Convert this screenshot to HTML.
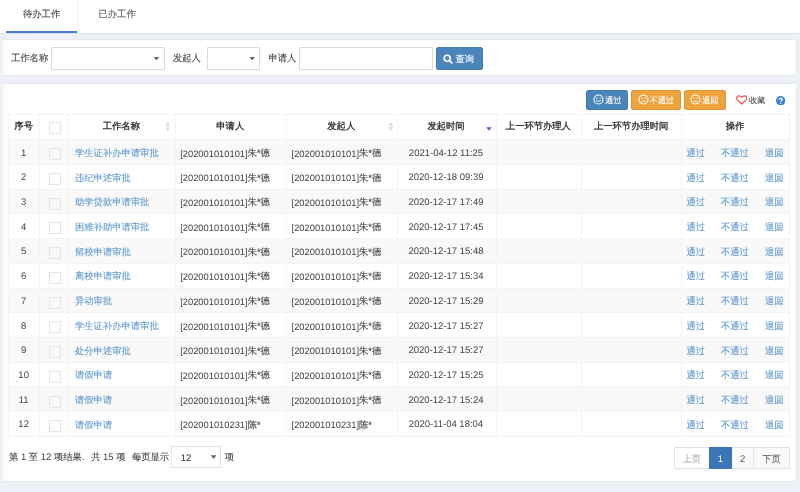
<!DOCTYPE html>
<html><head><meta charset="utf-8"><style>
*{box-sizing:border-box;margin:0;padding:0}
html,body{width:800px;height:492px;overflow:hidden}
body{background:#edf0f7;font-family:"Liberation Sans",sans-serif;font-size:9.5px;color:#333;position:relative;text-rendering:geometricPrecision}
.a{position:absolute;white-space:nowrap}
.c{font-size:9.3px;-webkit-text-stroke:.12px}
.t{line-height:12px}
.sb .c{font-size:8.1px}
.r .c{position:relative;top:-.7px}
.hb{-webkit-text-stroke:.3px}
.sel{position:absolute;border:1px solid #dcdcdc;background:#fff}
.caret{position:absolute;width:5.8px;height:3.8px;background:#666;clip-path:polygon(0 0,100% 0,50% 100%)}
.btn{position:absolute;border-radius:2.5px;color:#fff;box-shadow:inset 0 0 0 1px rgba(0,0,0,.07)}
.blue{background:#4a86bb}
.orange{background:#eda33e}
.cb{position:absolute;width:12.5px;height:12px;border:1px solid #e4e4e4}
.lk{color:#639dd3}
.pg{position:absolute;top:447px;height:22.4px;border:1px solid #e3e3e3;text-align:center;line-height:22.4px}
</style></head><body>
<div class="a" style="left:0;top:0;width:800px;height:492px;will-change:transform"><div class="a" style="left:0;top:0;width:800px;height:33px;background:#fff"></div>
<div class="a" style="left:0;top:32.8px;width:800px;height:1px;background:#dde1e6"></div>
<div class="a" style="left:77.3px;top:0;width:1px;height:32.8px;background:#f4f4f4"></div>
<div class="a" style="left:5.6px;top:31px;width:71.9px;height:2.2px;background:#4a7fd6"></div>
<div class="a t" style="left:23px;top:8px;color:#3c3c3c"><span class="c">待办工作</span></div>
<div class="a t" style="left:98.5px;top:8px;color:#555"><span class="c">已办工作</span></div>
<div class="a" style="left:1.5px;top:39.3px;width:794px;height:36.8px;background:#fff;border:1px solid #e6e9ed;border-width:1px 0;box-shadow:inset 3px 0 0 #f7f9fb,inset -1.5px 0 0 #f7f9fb"></div>
<div class="a t" style="left:11px;top:52px;color:#444"><span class="c">工作名称</span></div>
<div class="sel" style="left:51.3px;top:46.9px;width:113.3px;height:22.8px"><span class="caret" style="left:101.3px;top:8.8px"></span></div>
<div class="a t" style="left:173px;top:52px;color:#444"><span class="c">发起人</span></div>
<div class="sel" style="left:207px;top:46.9px;width:53px;height:22.8px"><span class="caret" style="left:41.3px;top:8.8px"></span></div>
<div class="a t" style="left:268.5px;top:52px;color:#444"><span class="c">申请人</span></div>
<div class="sel" style="left:299.4px;top:46.9px;width:133.4px;height:22.8px"></div>
<div class="btn blue" style="left:436px;top:46.9px;width:47px;height:22.8px"><svg width="10" height="10" viewBox="0 0 10 10" style="position:absolute;left:7.2px;top:7.4px"><circle cx="4.2" cy="4.2" r="3" fill="none" stroke="#fff" stroke-width="1.6"/><line x1="6.3" y1="6.3" x2="8.8" y2="8.8" stroke="#fff" stroke-width="1.8" stroke-linecap="round"/></svg><span class="a t" style="left:19.5px;top:6px"><span class="c">查询</span></span></div>
<div class="a" style="left:1.5px;top:82.6px;width:794px;height:399.4px;background:#fff;border:1px solid #e6e9ed;border-width:1px 0;box-shadow:inset 3px 0 0 #f7f9fb,inset -1.5px 0 0 #f7f9fb"></div>
<div class="btn sb blue" style="left:586.3px;top:90.3px;width:42px;height:19.5px"><svg width="11" height="11" viewBox="0 0 11 11" style="position:absolute;left:6.5px;top:4px"><circle cx="5.5" cy="5.5" r="4.5" fill="none" stroke="#fff" stroke-width="1.15"/><circle cx="3.8" cy="4.2" r=".7" fill="#fff"/><circle cx="7.2" cy="4.2" r=".7" fill="#fff"/><path d="M3.2 6.3 Q5.5 8.8 7.8 6.3" fill="none" stroke="#fff" stroke-width="1"/></svg><span class="a t" style="left:19px;top:4.3px"><span class="c">通过</span></span></div>
<div class="btn sb orange" style="left:631.3px;top:90.3px;width:49.4px;height:19.5px"><svg width="11" height="11" viewBox="0 0 11 11" style="position:absolute;left:6.5px;top:4px"><circle cx="5.5" cy="5.5" r="4.5" fill="none" stroke="#fff" stroke-width="1.15"/><circle cx="3.8" cy="4.2" r=".7" fill="#fff"/><circle cx="7.2" cy="4.2" r=".7" fill="#fff"/><path d="M3.3 8 Q5.5 5.8 7.7 8" fill="none" stroke="#fff" stroke-width="1"/></svg><span class="a t" style="left:18.5px;top:4.3px"><span class="c">不通过</span></span></div>
<div class="btn sb orange" style="left:684.2px;top:90.3px;width:41.5px;height:19.5px"><svg width="11" height="11" viewBox="0 0 11 11" style="position:absolute;left:6.3px;top:4px"><circle cx="5.5" cy="5.5" r="4.5" fill="none" stroke="#fff" stroke-width="1.15"/><circle cx="3.8" cy="4.2" r=".7" fill="#fff"/><circle cx="7.2" cy="4.2" r=".7" fill="#fff"/><path d="M3.3 8 Q5.5 5.8 7.7 8" fill="none" stroke="#fff" stroke-width="1"/></svg><span class="a t" style="left:18px;top:4.3px"><span class="c">退回</span></span></div>
<svg class="a" style="left:735.6px;top:95.2px" width="11.5" height="9.8" viewBox="0 0 11.5 9.8"><path d="M5.75 9 L1.5 4.9 C0.2 3.6 0.6 0.9 2.8 0.8 C4.1 0.75 5.1 1.5 5.75 2.4 C6.4 1.5 7.4 0.75 8.7 0.8 C10.9 0.9 11.3 3.6 10 4.9 Z" fill="none" stroke="#ea5652" stroke-width="1.3" stroke-linejoin="round"/></svg>
<div class="a t sb" style="left:749px;top:95px;color:#555"><span class="c">收藏</span></div>
<svg class="a" style="left:775.9px;top:95.5px" width="9.4" height="9.4" viewBox="0 0 9.4 9.4"><circle cx="4.7" cy="4.7" r="4.7" fill="#3e7ede"/><path d="M3.1 3.7 C3.1 1.9 6.3 1.9 6.3 3.6 C6.3 4.7 4.7 4.7 4.7 5.8" fill="none" stroke="#fff" stroke-width="1.3"/><circle cx="4.7" cy="7.3" r=".75" fill="#fff"/></svg>
<div class="a" style="left:8px;top:139.20px;width:781px;height:24.72px;background:#f9f9f9"></div>
<div class="a" style="left:8px;top:188.64px;width:781px;height:24.72px;background:#f9f9f9"></div>
<div class="a" style="left:8px;top:238.08px;width:781px;height:24.72px;background:#f9f9f9"></div>
<div class="a" style="left:8px;top:287.52px;width:781px;height:24.72px;background:#f9f9f9"></div>
<div class="a" style="left:8px;top:336.96px;width:781px;height:24.72px;background:#f9f9f9"></div>
<div class="a" style="left:8px;top:386.40px;width:781px;height:24.72px;background:#f9f9f9"></div>
<div class="a" style="left:8px;top:113.90px;width:781px;height:1px;background:#f3f3f3"></div>
<div class="a" style="left:8px;top:139.20px;width:781px;height:1px;background:#f3f3f3"></div>
<div class="a" style="left:8px;top:163.92px;width:781px;height:1px;background:#f3f3f3"></div>
<div class="a" style="left:8px;top:188.64px;width:781px;height:1px;background:#f3f3f3"></div>
<div class="a" style="left:8px;top:213.36px;width:781px;height:1px;background:#f3f3f3"></div>
<div class="a" style="left:8px;top:238.08px;width:781px;height:1px;background:#f3f3f3"></div>
<div class="a" style="left:8px;top:262.80px;width:781px;height:1px;background:#f3f3f3"></div>
<div class="a" style="left:8px;top:287.52px;width:781px;height:1px;background:#f3f3f3"></div>
<div class="a" style="left:8px;top:312.24px;width:781px;height:1px;background:#f3f3f3"></div>
<div class="a" style="left:8px;top:336.96px;width:781px;height:1px;background:#f3f3f3"></div>
<div class="a" style="left:8px;top:361.68px;width:781px;height:1px;background:#f3f3f3"></div>
<div class="a" style="left:8px;top:386.40px;width:781px;height:1px;background:#f3f3f3"></div>
<div class="a" style="left:8px;top:411.12px;width:781px;height:1px;background:#f3f3f3"></div>
<div class="a" style="left:8px;top:435.84px;width:781px;height:1px;background:#f3f3f3"></div>
<div class="a" style="left:8px;top:113.90px;width:1px;height:321.94px;background:#f4f4f4"></div>
<div class="a" style="left:39.3px;top:113.90px;width:1px;height:321.94px;background:#f4f4f4"></div>
<div class="a" style="left:68.2px;top:113.90px;width:1px;height:321.94px;background:#f4f4f4"></div>
<div class="a" style="left:174.5px;top:113.90px;width:1px;height:321.94px;background:#f4f4f4"></div>
<div class="a" style="left:286px;top:113.90px;width:1px;height:321.94px;background:#f4f4f4"></div>
<div class="a" style="left:396.5px;top:113.90px;width:1px;height:321.94px;background:#f4f4f4"></div>
<div class="a" style="left:495.5px;top:113.90px;width:1px;height:321.94px;background:#f4f4f4"></div>
<div class="a" style="left:581.25px;top:113.90px;width:1px;height:321.94px;background:#f4f4f4"></div>
<div class="a" style="left:681px;top:113.90px;width:1px;height:321.94px;background:#f4f4f4"></div>
<div class="a" style="left:789px;top:113.90px;width:1px;height:321.94px;background:#f4f4f4"></div>
<div class="a t" style="left:8px;width:31.299999999999997px;top:120.20px;text-align:center;color:#2a2a2a"><span class="c hb">序号</span></div>
<div class="a t" style="left:68.2px;width:106.3px;top:120.20px;text-align:center;color:#2a2a2a"><span class="c hb">工作名称</span></div>
<div class="a t" style="left:174.5px;width:111.5px;top:120.20px;text-align:center;color:#2a2a2a"><span class="c hb">申请人</span></div>
<div class="a t" style="left:286px;width:110.5px;top:120.20px;text-align:center;color:#2a2a2a"><span class="c hb">发起人</span></div>
<div class="a t" style="left:396.5px;width:99.0px;top:120.20px;text-align:center;color:#2a2a2a"><span class="c hb">发起时间</span></div>
<div class="a t" style="left:495.5px;width:85.75px;top:120.20px;text-align:center;color:#2a2a2a"><span class="c hb">上一环节办理人</span></div>
<div class="a t" style="left:581.25px;width:99.75px;top:120.20px;text-align:center;color:#2a2a2a"><span class="c hb">上一环节办理时间</span></div>
<div class="a t" style="left:681px;width:108px;top:120.20px;text-align:center;color:#2a2a2a"><span class="c hb">操作</span></div>
<span class="cb" style="left:48.5px;top:121.90px"></span>
<svg class="a" style="left:165px;top:120.80px" width="5.6" height="11" viewBox="0 0 5.6 11"><path d="M2.8 0.4 L5.4 4.9 H0.2Z M2.8 10.6 L5.4 6.1 H0.2Z" fill="#e0e0e0"/></svg>
<svg class="a" style="left:387.8px;top:120.80px" width="5.6" height="11" viewBox="0 0 5.6 11"><path d="M2.8 0.4 L5.4 4.9 H0.2Z M2.8 10.6 L5.4 6.1 H0.2Z" fill="#e0e0e0"/></svg>
<svg class="a" style="left:485.5px;top:126.90px" width="6" height="4" viewBox="0 0 6 4"><path d="M0.3 0.3 H5.7 L3 3.7Z" fill="#5b5bd6"/></svg>
<div class="a t" style="left:8px;width:31.299999999999997px;top:147.50px;text-align:center;color:#444">1</div>
<span class="cb" style="left:48.5px;top:148.30px"></span>
<div class="a t r lk" style="left:75px;top:147.50px"><span class="c">学生证补办申请审批</span></div>
<div class="a t r" style="left:180.2px;top:147.50px;color:#444;font-size:9.33px">[202001010101]<span class="c">朱*德</span></div>
<div class="a t r" style="left:291.6px;top:147.50px;color:#444;font-size:9.33px">[202001010101]<span class="c">朱*德</span></div>
<div class="a t" style="left:396.5px;width:99.0px;top:147.50px;text-align:center;color:#444">2021-04-12 11:25</div>
<div class="a t r lk" style="left:686.4px;top:147.50px"><span class="c">通过</span></div>
<div class="a t r lk" style="left:721px;top:147.50px"><span class="c">不通过</span></div>
<div class="a t r lk" style="left:765px;top:147.50px"><span class="c">退回</span></div>
<div class="a t" style="left:8px;width:31.299999999999997px;top:172.22px;text-align:center;color:#444">2</div>
<span class="cb" style="left:48.5px;top:173.02px"></span>
<div class="a t r lk" style="left:75px;top:172.22px"><span class="c">违纪申述审批</span></div>
<div class="a t r" style="left:180.2px;top:172.22px;color:#444;font-size:9.33px">[202001010101]<span class="c">朱*德</span></div>
<div class="a t r" style="left:291.6px;top:172.22px;color:#444;font-size:9.33px">[202001010101]<span class="c">朱*德</span></div>
<div class="a t" style="left:396.5px;width:99.0px;top:172.22px;text-align:center;color:#444">2020-12-18 09:39</div>
<div class="a t r lk" style="left:686.4px;top:172.22px"><span class="c">通过</span></div>
<div class="a t r lk" style="left:721px;top:172.22px"><span class="c">不通过</span></div>
<div class="a t r lk" style="left:765px;top:172.22px"><span class="c">退回</span></div>
<div class="a t" style="left:8px;width:31.299999999999997px;top:196.94px;text-align:center;color:#444">3</div>
<span class="cb" style="left:48.5px;top:197.74px"></span>
<div class="a t r lk" style="left:75px;top:196.94px"><span class="c">助学贷款申请审批</span></div>
<div class="a t r" style="left:180.2px;top:196.94px;color:#444;font-size:9.33px">[202001010101]<span class="c">朱*德</span></div>
<div class="a t r" style="left:291.6px;top:196.94px;color:#444;font-size:9.33px">[202001010101]<span class="c">朱*德</span></div>
<div class="a t" style="left:396.5px;width:99.0px;top:196.94px;text-align:center;color:#444">2020-12-17 17:49</div>
<div class="a t r lk" style="left:686.4px;top:196.94px"><span class="c">通过</span></div>
<div class="a t r lk" style="left:721px;top:196.94px"><span class="c">不通过</span></div>
<div class="a t r lk" style="left:765px;top:196.94px"><span class="c">退回</span></div>
<div class="a t" style="left:8px;width:31.299999999999997px;top:221.66px;text-align:center;color:#444">4</div>
<span class="cb" style="left:48.5px;top:222.46px"></span>
<div class="a t r lk" style="left:75px;top:221.66px"><span class="c">困难补助申请审批</span></div>
<div class="a t r" style="left:180.2px;top:221.66px;color:#444;font-size:9.33px">[202001010101]<span class="c">朱*德</span></div>
<div class="a t r" style="left:291.6px;top:221.66px;color:#444;font-size:9.33px">[202001010101]<span class="c">朱*德</span></div>
<div class="a t" style="left:396.5px;width:99.0px;top:221.66px;text-align:center;color:#444">2020-12-17 17:45</div>
<div class="a t r lk" style="left:686.4px;top:221.66px"><span class="c">通过</span></div>
<div class="a t r lk" style="left:721px;top:221.66px"><span class="c">不通过</span></div>
<div class="a t r lk" style="left:765px;top:221.66px"><span class="c">退回</span></div>
<div class="a t" style="left:8px;width:31.299999999999997px;top:246.38px;text-align:center;color:#444">5</div>
<span class="cb" style="left:48.5px;top:247.18px"></span>
<div class="a t r lk" style="left:75px;top:246.38px"><span class="c">留校申请审批</span></div>
<div class="a t r" style="left:180.2px;top:246.38px;color:#444;font-size:9.33px">[202001010101]<span class="c">朱*德</span></div>
<div class="a t r" style="left:291.6px;top:246.38px;color:#444;font-size:9.33px">[202001010101]<span class="c">朱*德</span></div>
<div class="a t" style="left:396.5px;width:99.0px;top:246.38px;text-align:center;color:#444">2020-12-17 15:48</div>
<div class="a t r lk" style="left:686.4px;top:246.38px"><span class="c">通过</span></div>
<div class="a t r lk" style="left:721px;top:246.38px"><span class="c">不通过</span></div>
<div class="a t r lk" style="left:765px;top:246.38px"><span class="c">退回</span></div>
<div class="a t" style="left:8px;width:31.299999999999997px;top:271.10px;text-align:center;color:#444">6</div>
<span class="cb" style="left:48.5px;top:271.90px"></span>
<div class="a t r lk" style="left:75px;top:271.10px"><span class="c">离校申请审批</span></div>
<div class="a t r" style="left:180.2px;top:271.10px;color:#444;font-size:9.33px">[202001010101]<span class="c">朱*德</span></div>
<div class="a t r" style="left:291.6px;top:271.10px;color:#444;font-size:9.33px">[202001010101]<span class="c">朱*德</span></div>
<div class="a t" style="left:396.5px;width:99.0px;top:271.10px;text-align:center;color:#444">2020-12-17 15:34</div>
<div class="a t r lk" style="left:686.4px;top:271.10px"><span class="c">通过</span></div>
<div class="a t r lk" style="left:721px;top:271.10px"><span class="c">不通过</span></div>
<div class="a t r lk" style="left:765px;top:271.10px"><span class="c">退回</span></div>
<div class="a t" style="left:8px;width:31.299999999999997px;top:295.82px;text-align:center;color:#444">7</div>
<span class="cb" style="left:48.5px;top:296.62px"></span>
<div class="a t r lk" style="left:75px;top:295.82px"><span class="c">异动审批</span></div>
<div class="a t r" style="left:180.2px;top:295.82px;color:#444;font-size:9.33px">[202001010101]<span class="c">朱*德</span></div>
<div class="a t r" style="left:291.6px;top:295.82px;color:#444;font-size:9.33px">[202001010101]<span class="c">朱*德</span></div>
<div class="a t" style="left:396.5px;width:99.0px;top:295.82px;text-align:center;color:#444">2020-12-17 15:29</div>
<div class="a t r lk" style="left:686.4px;top:295.82px"><span class="c">通过</span></div>
<div class="a t r lk" style="left:721px;top:295.82px"><span class="c">不通过</span></div>
<div class="a t r lk" style="left:765px;top:295.82px"><span class="c">退回</span></div>
<div class="a t" style="left:8px;width:31.299999999999997px;top:320.54px;text-align:center;color:#444">8</div>
<span class="cb" style="left:48.5px;top:321.34px"></span>
<div class="a t r lk" style="left:75px;top:320.54px"><span class="c">学生证补办申请审批</span></div>
<div class="a t r" style="left:180.2px;top:320.54px;color:#444;font-size:9.33px">[202001010101]<span class="c">朱*德</span></div>
<div class="a t r" style="left:291.6px;top:320.54px;color:#444;font-size:9.33px">[202001010101]<span class="c">朱*德</span></div>
<div class="a t" style="left:396.5px;width:99.0px;top:320.54px;text-align:center;color:#444">2020-12-17 15:27</div>
<div class="a t r lk" style="left:686.4px;top:320.54px"><span class="c">通过</span></div>
<div class="a t r lk" style="left:721px;top:320.54px"><span class="c">不通过</span></div>
<div class="a t r lk" style="left:765px;top:320.54px"><span class="c">退回</span></div>
<div class="a t" style="left:8px;width:31.299999999999997px;top:345.26px;text-align:center;color:#444">9</div>
<span class="cb" style="left:48.5px;top:346.06px"></span>
<div class="a t r lk" style="left:75px;top:345.26px"><span class="c">处分申述审批</span></div>
<div class="a t r" style="left:180.2px;top:345.26px;color:#444;font-size:9.33px">[202001010101]<span class="c">朱*德</span></div>
<div class="a t r" style="left:291.6px;top:345.26px;color:#444;font-size:9.33px">[202001010101]<span class="c">朱*德</span></div>
<div class="a t" style="left:396.5px;width:99.0px;top:345.26px;text-align:center;color:#444">2020-12-17 15:27</div>
<div class="a t r lk" style="left:686.4px;top:345.26px"><span class="c">通过</span></div>
<div class="a t r lk" style="left:721px;top:345.26px"><span class="c">不通过</span></div>
<div class="a t r lk" style="left:765px;top:345.26px"><span class="c">退回</span></div>
<div class="a t" style="left:8px;width:31.299999999999997px;top:369.98px;text-align:center;color:#444">10</div>
<span class="cb" style="left:48.5px;top:370.78px"></span>
<div class="a t r lk" style="left:75px;top:369.98px"><span class="c">请假申请</span></div>
<div class="a t r" style="left:180.2px;top:369.98px;color:#444;font-size:9.33px">[202001010101]<span class="c">朱*德</span></div>
<div class="a t r" style="left:291.6px;top:369.98px;color:#444;font-size:9.33px">[202001010101]<span class="c">朱*德</span></div>
<div class="a t" style="left:396.5px;width:99.0px;top:369.98px;text-align:center;color:#444">2020-12-17 15:25</div>
<div class="a t r lk" style="left:686.4px;top:369.98px"><span class="c">通过</span></div>
<div class="a t r lk" style="left:721px;top:369.98px"><span class="c">不通过</span></div>
<div class="a t r lk" style="left:765px;top:369.98px"><span class="c">退回</span></div>
<div class="a t" style="left:8px;width:31.299999999999997px;top:394.70px;text-align:center;color:#444">11</div>
<span class="cb" style="left:48.5px;top:395.50px"></span>
<div class="a t r lk" style="left:75px;top:394.70px"><span class="c">请假申请</span></div>
<div class="a t r" style="left:180.2px;top:394.70px;color:#444;font-size:9.33px">[202001010101]<span class="c">朱*德</span></div>
<div class="a t r" style="left:291.6px;top:394.70px;color:#444;font-size:9.33px">[202001010101]<span class="c">朱*德</span></div>
<div class="a t" style="left:396.5px;width:99.0px;top:394.70px;text-align:center;color:#444">2020-12-17 15:24</div>
<div class="a t r lk" style="left:686.4px;top:394.70px"><span class="c">通过</span></div>
<div class="a t r lk" style="left:721px;top:394.70px"><span class="c">不通过</span></div>
<div class="a t r lk" style="left:765px;top:394.70px"><span class="c">退回</span></div>
<div class="a t" style="left:8px;width:31.299999999999997px;top:419.42px;text-align:center;color:#444">12</div>
<span class="cb" style="left:48.5px;top:420.22px"></span>
<div class="a t r lk" style="left:75px;top:419.42px"><span class="c">请假申请</span></div>
<div class="a t r" style="left:180.2px;top:419.42px;color:#444;font-size:9.33px">[202001010231]<span class="c">陈*</span></div>
<div class="a t r" style="left:291.6px;top:419.42px;color:#444;font-size:9.33px">[202001010231]<span class="c">陈*</span></div>
<div class="a t" style="left:396.5px;width:99.0px;top:419.42px;text-align:center;color:#444">2020-11-04 18:04</div>
<div class="a t r lk" style="left:686.4px;top:419.42px"><span class="c">通过</span></div>
<div class="a t r lk" style="left:721px;top:419.42px"><span class="c">不通过</span></div>
<div class="a t r lk" style="left:765px;top:419.42px"><span class="c">退回</span></div>
<div class="a t" style="left:9px;top:450.5px;color:#444"><span class="c">第</span> 1 <span class="c">至</span> 12 <span class="c">项结果</span>.<span style="display:inline-block;width:6.6px"></span><span class="c">共</span> 15 <span class="c">项</span></div>
<div class="a t" style="left:131.9px;top:450.5px;color:#444"><span class="c">每页显示</span></div>
<div class="sel" style="left:171.3px;top:445.7px;width:50px;height:22.1px;border-color:#e3e3e3"><span class="a t" style="left:8.5px;top:6px;color:#333">12</span><span class="caret" style="left:38.4px;top:8.6px"></span></div>
<div class="a t" style="left:224.8px;top:450.5px;color:#444"><span class="c">项</span></div>
<div class="pg" style="left:674px;width:35.5px;color:#b5b5b5;background:#fff"><span class="c">上页</span></div>
<div class="pg" style="left:709px;width:23px;color:#fff;background:#3c76b6;border-color:#3c76b6;padding-top:1.2px">1</div>
<div class="pg" style="left:731.8px;width:22.5px;color:#555;background:#fafafa;border-left:none;padding-top:1.2px">2</div>
<div class="pg" style="left:754.3px;width:35.4px;color:#666;background:#fafafa;border-left:none"><span class="c">下页</span></div></div>
</body></html>
